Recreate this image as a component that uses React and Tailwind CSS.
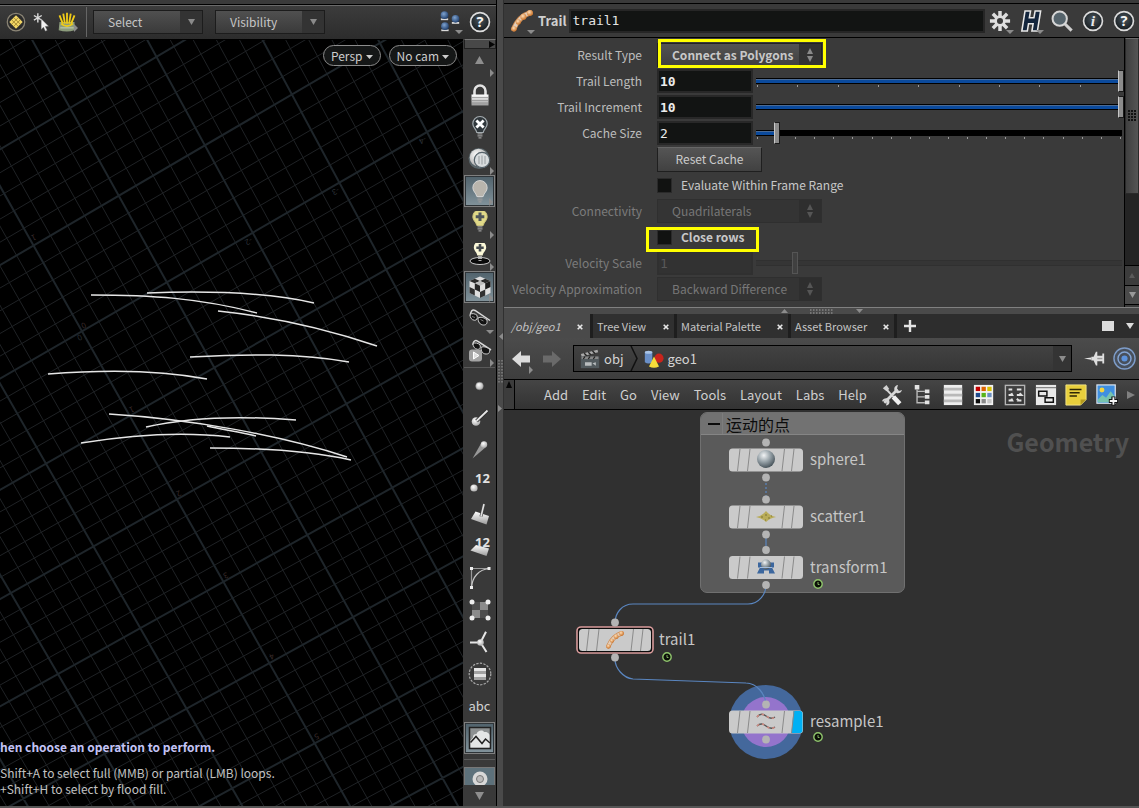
import React from "react";

const UI = "font-['Noto_Sans_CJK_SC','Noto_Sans',sans-serif]";
const MONO = "font-['DejaVu_Sans_Mono','Liberation_Mono',monospace]";

/* ---------- viewport grid ---------- */

function solve(m) {
  const n = m.length;
  for (let c = 0; c < n; c++) {
    let p = c;
    for (let r = c + 1; r < n; r++) if (Math.abs(m[r][c]) > Math.abs(m[p][c])) p = r;
    [m[c], m[p]] = [m[p], m[c]];
    for (let r = 0; r < n; r++) {
      if (r === c) continue;
      const f = m[r][c] / m[c][c];
      for (let k = c; k <= n; k++) m[r][k] -= f * m[c][k];
    }
  }
  return m.map((row, i) => row[n] / row[i]);
}

// ground plane cell -> viewport position
const anchors = [
  [-2, 1, 70, 68],
  [0, 4, 427, 92],
  [3, -2, 58, 634],
  [5, 1, 398, 658],
];
const rows = [];
anchors.forEach(([i, j, x, y]) => {
  rows.push([i, j, 1, 0, 0, 0, -x * i, -x * j, x]);
  rows.push([0, 0, 0, i, j, 1, -y * i, -y * j, y]);
});
const h = solve(rows);
const project = (i, j) => {
  const w = h[6] * i + h[7] * j + 1;
  return [(h[0] * i + h[1] * j + h[2]) / w, (h[3] * i + h[4] * j + h[5]) / w];
};
const segment = (a, b) => {
  const [x1, y1] = project(...a);
  const [x2, y2] = project(...b);
  return `M${x1.toFixed(1)} ${y1.toFixed(1)}L${x2.toFixed(1)} ${y2.toFixed(1)}`;
};
let minor = "";
let major = "";
for (let k = -40; k <= 60; k++) {
  const s = segment([k / 5, -8], [k / 5, 12]) + segment([-8, k / 5], [12, k / 5]);
  if (k % 5 === 0) major += s;
  else minor += s;
}

const axisLabels = [
  ["1", 34, 198, "#3a2c2c"],
  ["0", 84, 286, "#3a2c2c"],
  ["0", 80, 298, "#2c3238"],
  ["-2", 249, 202, "#2c3238"],
  ["-3", 336, 152, "#2c3238"],
  ["-4", 423, 101, "#2c3238"],
  ["1", 132, 370, "#3a2c2c"],
  ["2", 179, 454, "#3a2c2c"],
  ["3", 226, 536, "#3a2c2c"],
  ["4", 272, 617, "#3a2c2c"],
  ["5", 317, 697, "#3a2c2c"],
];

const trails = [
  "M91 295C150 295 200 298 257 313",
  "M147 293C200 291 262 291 314 303",
  "M218 311C275 317 330 330 377 346",
  "M190 357C245 354 300 353 349 362",
  "M48 374C110 369 160 370 207 379",
  "M109 414C190 419 280 435 347 457",
  "M146 427C190 417 245 416 296 420",
  "M207 426C225 430 240 432 256 436",
  "M81 443C130 435 180 431 230 437",
  "M210 448C260 448 310 451 351 460",
];

function Viewport() {
  return (
    <svg className="absolute inset-0 h-full w-full" aria-hidden="true">
      <path d={minor} stroke="#1f2225" strokeWidth="1" fill="none" />
      <path d={major} stroke="#1e252a" strokeWidth="2" fill="none" />
      {axisLabels.map(([t, x, y, c]) => (
        <text key={`${x}-${y}`} transform={`translate(${x} ${y}) rotate(155)`} textAnchor="middle" dominantBaseline="central" fill={c} className="text-[8px]">
          {t}
        </text>
      ))}
      <g transform="translate(0 -40)" fill="none" stroke="#e6e6e6" strokeWidth="1.500">
        {trails.map((d) => (
          <path key={d} d={d} />
        ))}
      </g>
    </svg>
  );
}

/* ---------- drawings ---------- */

const Defs = () => (
  <svg width="0" height="0" className="absolute" aria-hidden="true">
    <defs>
      <linearGradient id="metal" x1="0" y1="0" x2="0" y2="1">
        <stop offset="0" stopColor="#ffffff" />
        <stop offset="1" stopColor="#9a9a9a" />
      </linearGradient>
      <radialGradient id="ball" cx="0.38" cy="0.3" r="0.7">
        <stop offset="0" stopColor="#f2f4f5" />
        <stop offset="0.5" stopColor="#9aa5ab" />
        <stop offset="1" stopColor="#4a565d" />
      </radialGradient>
      <radialGradient id="white" cx="0.4" cy="0.35" r="0.7">
        <stop offset="0" stopColor="#ffffff" />
        <stop offset="1" stopColor="#a8a8a8" />
      </radialGradient>
      <radialGradient id="blue" cx="0.4" cy="0.35" r="0.7">
        <stop offset="0" stopColor="#7fa3cf" />
        <stop offset="1" stopColor="#1b3a68" />
      </radialGradient>
      <radialGradient id="badge" cx="0.5" cy="0.4" r="0.6">
        <stop offset="0" stopColor="#4a555c" />
        <stop offset="1" stopColor="#14191d" />
      </radialGradient>
      <radialGradient id="orange" cx="0.4" cy="0.35" r="0.7">
        <stop offset="0" stopColor="#ffdfb8" />
        <stop offset="1" stopColor="#c56a1e" />
      </radialGradient>
    </defs>
  </svg>
);

const Svg = ({ s = 24, children, className = "" }) => (
  <svg viewBox="0 0 24 24" width={s} height={s} className={`shrink-0 ${className}`} fill="none" aria-hidden="true">
    {children}
  </svg>
);

const bulbPath = "M12 1.500a7.200 7.200 0 0 0-7.200 7.200c0 3.800 3.200 5 4 8.800h6.400c.8-3.800 4-5 4-8.800A7.200 7.200 0 0 0 12 1.500z";
const BulbBase = () => <path d="M9.500 18.800h5M9.500 20.800h5M10.500 22.800h3" stroke="#9a9a9a" strokeWidth="1.200" />;

const icons = {
  lock: (
    <>
      <path d="M6.500 12V8a5.500 5.500 0 0 1 11 0v4" stroke="#e2e2e2" strokeWidth="2.600" />
      <rect x="3.500" y="11.500" width="17" height="11" fill="url(#metal)" />
      <path d="M4 14.500h16M4 17.500h16M4 20h16" stroke="#8b8b8b" strokeWidth="0.700" />
    </>
  ),
  bulbX: (
    <>
      <path d={bulbPath} fill="#30373b" stroke="#a4acb0" strokeWidth="1.200" />
      <path d="M8.400 5.400l7.200 7.200M15.600 5.400l-7.200 7.200" stroke="#fff" strokeWidth="2.800" />
      <BulbBase />
    </>
  ),
  headlight: (
    <>
      <circle cx="11" cy="11.500" r="10.500" fill="#78909a" opacity="0.500" />
      <circle cx="10.500" cy="10.500" r="8.800" fill="url(#white)" />
      <circle cx="14" cy="13" r="7.700" fill="#d8dcde" stroke="#55626a" strokeWidth="1.200" />
      <path d="M11 9v8M14 8.500v9M17 9v8" stroke="#a2a8ab" strokeWidth="1.200" />
    </>
  ),
  bulb: (
    <>
      <path d={bulbPath} fill="#b9b5ad" stroke="#dedede" strokeWidth="0.800" />
      <BulbBase />
    </>
  ),
  bulbPlus: (
    <g transform="translate(0 -3)">
      <path d={bulbPath} fill="#e0d988" stroke="#c9c07a" strokeWidth="1" />
      <path d="M12 4.500v8.600M7.700 8.800h8.600" stroke="#4f565a" strokeWidth="3" />
      <BulbBase />
    </g>
  ),
  bulbShadow: (
    <g transform="translate(0 -2.500)">
      <ellipse cx="12" cy="20.500" rx="10" ry="3.500" fill="#0a0a0a" stroke="#c8c8c8" strokeWidth="1" />
      <path d="M12 .5a6.200 6.200 0 0 0-6.200 6.200c0 3.600 3 4.800 3.500 8.300h5.400c.5-3.500 3.500-4.700 3.500-8.300A6.200 6.200 0 0 0 12 .5z" fill="#fbf8d8" />
      <path d="M12 3.500v7.400M8.300 7.200h7.400" stroke="#454b50" strokeWidth="2.600" />
      <path d="M10 16h4M10 18h4M10.500 20h3" stroke="#aaa" strokeWidth="1.200" />
    </g>
  ),
  cube: (
    <>
      <path d="M1.500 6L12 1.500 22.500 6v12L12 23 1.500 18z" fill="#dedede" />
      <path d="M1.500 6l5.300-2.300L12 6 6.800 8.300zM12 6l5.200-2.300L22.500 6l-5.300 2.300z" fill="#2a2a2a" />
      <path d="M6.800 8.300L12 6l5.200 2.300L12 10.700z" fill="#bdbdbd" />
      <path d="M6.800 8.300l5.200 2.400v6.200l-5.200-2.400z" fill="#262626" />
      <path d="M1.500 12l5.300 2.500v6L1.500 18zM12 16.900l5.200-2.400v6L12 23z" fill="#303030" />
      <path d="M17.200 8.300L22.500 6v6l-5.300 2.500z" fill="#1c1c1c" />
    </>
  ),
  glasses: (
    <>
      <path d="M2.500 9c0-5 2-7 4.500-5.500L22 13.500" stroke="#d8d8d8" strokeWidth="1.500" />
      <path d="M2 7.500c2-1.500 5-1 7 .8 1 3.500-.5 5-2.500 5C3.500 13 2 10.500 2 7.500zM10 11c2.500-1.500 6-.5 9 2 .5 4-1 5-3.500 5-3.500 0-5.500-3-5.500-7z" fill="#131313" stroke="#cfcfcf" strokeWidth="1" />
      <path d="M4 9.500l3 1M12.500 12.500l3 1.500" stroke="#777" strokeWidth="1" />
    </>
  ),
  glassesPlay: (
    <>
      <path d="M5 6c0-5 3-5 5-3.500L23 11" stroke="#d8d8d8" strokeWidth="1.500" />
      <path d="M5 4.500c2-1 5-.5 7 1.300 1 3.500-.5 4.500-2.500 4.500C6.500 10 5 7.500 5 4.500zM13 8.500c2.500-1.500 5.500-.5 8.500 1.800.5 4-1 4.700-3.500 4.700-3.500 0-5-3-5-6.500z" fill="#131313" stroke="#cfcfcf" strokeWidth="1" />
      <rect x="1" y="10.500" width="13" height="12" rx="3" fill="#a4a4a4" />
      <path d="M5.500 13l5.500 3.500-5.500 3.500z" fill="#ddd" stroke="#fff" strokeWidth="1" />
    </>
  ),
  point: <circle cx="11.500" cy="12" r="3.800" fill="url(#white)" stroke="#888" strokeWidth="0.500" />,
  normal: (
    <>
      <circle cx="8" cy="15.500" r="4.300" fill="url(#white)" />
      <path d="M8.500 15L19.500 4.500" stroke="#2c2c2c" strokeWidth="3.600" />
      <path d="M8.500 15L19.500 4.500" stroke="#e5e5e5" strokeWidth="1.800" />
    </>
  ),
  trailPt: (
    <>
      <path d="M4.500 20.500L13 5.500l5 3.500z" fill="#999" />
      <circle cx="16" cy="6.500" r="3.200" fill="url(#white)" />
    </>
  ),
  prim: (
    <>
      <path d="M7.500 9.500L21 14l-2.500 8.500L3 17z" fill="url(#metal)" />
      <path d="M13 14.500L16 2" stroke="#444" strokeWidth="3" />
      <path d="M13 14.500L16 2" stroke="#e2e2e2" strokeWidth="1.600" />
    </>
  ),
  hull: (
    <>
      <path d="M3.500 22V2.500H21" stroke="#999" strokeWidth="1.200" />
      <path d="M3.500 22C4 11 11 3.500 21 2.500" stroke="#c8c8c8" strokeWidth="1.200" />
      <path d="M2 1h3v3H2zM19.500 1h3v3h-3zM2 20h3v3H2z" fill="#eee" />
    </>
  ),
  uv: (
    <>
      <rect x="4" y="4" width="16" height="16" fill="#4d4d4d" />
      <path d="M4 12h8v8H4zM12 4h8v8h-8z" fill="#8b8b8b" />
      <circle cx="4" cy="4" r="2.500" fill="#eee" />
      <circle cx="20" cy="4" r="2.500" fill="#eee" />
      <circle cx="4" cy="20" r="2.500" fill="#eee" />
      <circle cx="20" cy="20" r="2.500" fill="#eee" />
    </>
  ),
  axis: (
    <>
      <path d="M12.500 12.500L18 1.800M12.500 12.500L18.500 22M12.500 12.500H2" stroke="#e6e6e6" strokeWidth="2" />
      <circle cx="12.500" cy="12.500" r="3.300" fill="url(#white)" />
    </>
  ),
  group: (
    <>
      <circle cx="12" cy="12" r="10.800" stroke="#a8a8a8" strokeWidth="1.200" strokeDasharray="2.300 1.300" />
      <rect x="6" y="6" width="12" height="12" fill="#e4e4e4" />
      <path d="M6 10.500h12M6 16.500h12" stroke="#a2a2a2" strokeWidth="3" />
    </>
  ),
  image: (
    <>
      <rect x="1.500" y="1.500" width="21" height="21" fill="#8d9192" stroke="#222" strokeWidth="1.500" />
      <path d="M5 11.500c0-3 2-3.500 3.500-3.500 1-3.500 6-4.500 7.500-2 3-.5 6 1 5.500 4.500v11h-19v-7z" fill="#e4e6e6" />
      <path d="M2.500 16.500L8 10.500l6 7 3.500-4.500 4.500 4" stroke="#222" strokeWidth="1.500" />
    </>
  ),
};

const Num12 = ({ children }) => (
  <svg viewBox="0 0 24 24" width="24" height="24" className="overflow-visible" aria-hidden="true">
    {children}
    <text x="7" y="13" fill="#e2e2e2" className="font-['Open_Sans',sans-serif] text-[13px] font-bold">12</text>
  </svg>
);

const Corner = ({ down, className = "" }) => (
  <svg width="8" height="8" viewBox="0 0 8 8" className={`absolute ${className}`} aria-hidden="true">
    <path d={down ? "M0 2h8L4 6z" : "M2 0v8l4-4z"} fill="#8c8c8c" />
  </svg>
);

const Tri = ({ up, className = "" }) => (
  <svg width="9" height="8" viewBox="0 0 9 8" preserveAspectRatio="none" className={className} aria-hidden="true">
    <path d={up ? "M0 8L4.500 0 9 8z" : "M0 0h9L4.500 8z"} fill="currentColor" />
  </svg>
);

function Round({ italic, s = 22 }) {
  return (
    <svg viewBox="0 0 24 24" width={s} height={s} className="shrink-0" aria-hidden="true">
      <circle cx="12" cy="12" r="10.300" fill="url(#badge)" stroke="#dcdcdc" strokeWidth="1.800" />
      {italic ? (
        <text x="12" y="17.500" textAnchor="middle" fill="#e8e8e8" className="font-['Liberation_Serif',serif] text-[17px] font-bold italic">i</text>
      ) : (
        <text x="12" y="17.500" textAnchor="middle" fill="#f4f4f4" className="font-['Open_Sans',sans-serif] text-[16px] font-bold">?</text>
      )}
    </svg>
  );
}

const TrailBeads = () => (
  <>
    <path d="M3 20.500C7 11 13 5.500 21 3" stroke="#cf8a50" strokeWidth="6" strokeLinecap="round" />
    <path d="M3 20.500C7 11 13 5.500 21 3" stroke="#e2cdb8" strokeWidth="4" strokeLinecap="round" />
    <circle cx="3.500" cy="20.500" r="2.800" fill="url(#orange)" />
    <circle cx="8" cy="13" r="2.800" fill="url(#orange)" />
    <circle cx="13.500" cy="7.500" r="3.300" fill="url(#orange)" />
    <circle cx="20.500" cy="3.300" r="3.200" fill="url(#orange)" />
  </>
);

/* ---------- left pane ---------- */

function ToolDrop({ label }) {
  return (
    <button className="flex h-[24px] w-[110px] items-center border border-[#1c1c1c] bg-linear-to-b from-[#505050] to-[#3a3a3a] text-[12px] text-[#c6c6c6]">
      <span className="flex-1 pl-[14px] text-left leading-[22px]">{label}</span>
      <span className="flex h-full w-[22px] items-center justify-center bg-[#333333] text-[#8a8a8a]">
        <Tri className="h-[6px] w-[7px]" />
      </span>
    </button>
  );
}

const toolsA = [
  ["Lock camera", icons.lock, "", ""],
  ["No lighting", icons.bulbX, "", ""],
  ["Headlight", icons.headlight, "", "r"],
  ["Normal lighting", icons.bulb, "on", "r"],
  ["High quality lighting", icons.bulbPlus, "", "r"],
  ["Shadows", icons.bulbShadow, "", "r"],
  ["Materials", icons.cube, "on", "r"],
  ["Hide objects", icons.glasses, "", "d"],
  ["Ghost objects", icons.glassesPlay, "", "r"],
];
const dot12 = (
  <Num12>
    <circle cx="6" cy="18" r="3.600" fill="url(#white)" />
  </Num12>
);
const prim12 = (
  <Num12>
    <path d="M8 11l13 3.500-2.500 7.500L2.500 16.500z" fill="url(#metal)" />
  </Num12>
);
const toolsB = [
  ["Points", icons.point],
  ["Point normals", icons.normal],
  ["Point trails", icons.trailPt],
  ["Point numbers", null, dot12],
  ["Primitive normals", icons.prim],
  ["Primitive numbers", null, prim12],
  ["Hulls", icons.hull],
  ["UV", icons.uv],
  ["Axes", icons.axis],
  ["Groups", icons.group],
  ["Labels", null, <span key="abc" className="text-[13px] text-[#d2d2d2]">abc</span>],
  ["Background image", icons.image, null, true],
];

function ToolButton({ label, icon, node, on, arrow }) {
  return (
    <button
      aria-label={label}
      className={`relative flex h-[32px] w-[31px] shrink-0 items-center justify-center ${
        on ? "border border-[#7f7f7f] bg-linear-to-b from-[#50626c] to-[#82939b] ring-1 ring-inset ring-[#2e3438]" : ""
      }`}
    >
      {icon ? <Svg s={24}>{icon}</Svg> : node}
      {arrow === "r" && <Corner className="-right-[1px] bottom-0" />}
      {arrow === "d" && <Corner down className="right-[1px] -bottom-[1px]" />}
    </button>
  );
}

function LeftPane() {
  return (
    <section className="flex min-w-0 flex-col border-r border-black bg-[#3a3a3a]">
      <div className="h-[5px] border-b border-black" />
      <div className="flex h-[34px] items-center overflow-hidden border-t border-[#6a6a6a] bg-linear-to-b from-[#3c3c3c] to-[#2c2c2c] pb-[2px]">
        <button aria-label="Snap to grid" className="ml-[6px]">
          <Svg s={20}>
            <circle cx="12" cy="12" r="10.500" fill="#2c2c2c" stroke="#8a8475" strokeWidth="1.500" />
            <path d="M12 4l8 8-8 8-8-8z" fill="#f3d765" />
            <path d="M9.300 6.700l8 8M6.700 9.300l8 8M14.700 6.700l-8 8M17.300 9.300l-8 8" stroke="#9a7f2c" strokeWidth="1" />
          </Svg>
        </button>
        <button aria-label="Select tool" className="ml-[6px]">
          <Svg s={20}>
            <path d="M7 1.500v11M2.300 4.200l9.400 5.600M11.700 4.200L2.300 9.800" stroke="#dadada" strokeWidth="1.700" />
            <path d="M11 8l9 9-4 .3 2.300 4.700-2.300 1-2.200-4.800L11 21z" fill="#f2f2f2" stroke="#555" strokeWidth="0.500" />
          </Svg>
        </button>
        <button aria-label="Grass brush" className="relative ml-[5px]">
          <Svg s={20}>
            <path d="M3 12h18v10q-9 3-19 0z" fill="#8c9c7c" />
            <path d="M3 4l4 10M7.500 2l2 12M12 1v13M16.500 2l-2 12M21 4l-4 10M5 14q7 6 14 0" stroke="#f0cb18" strokeWidth="2.200" />
            <path d="M4 19h16" stroke="#bac5a8" strokeWidth="1.500" />
          </Svg>
          <Corner className="-right-[3px] bottom-0" />
        </button>
        <div className="ml-[9px] h-[30px] w-px bg-[#666666]" />
        <div className="ml-[6px] flex gap-[12px]">
          <ToolDrop label="Select" />
          <ToolDrop label="Visibility" />
        </div>
        <div className="flex-1" />
        <button aria-label="Display users" className="relative">
          <Svg s={22}>
            {[[6, 4.500], [18, 8.500], [6.500, 16.500]].map(([x, y]) => (
              <g key={x}>
                <path d={`M${x - 4} ${y + 3.500}h8v2h-8z`} fill="#d8d8d8" />
                <circle cx={x} cy={y} r="4.200" fill="url(#blue)" />
              </g>
            ))}
          </Svg>
          <Corner down className="-right-[2px] -bottom-[3px]" />
        </button>
        <button aria-label="Help" className="ml-[8px] mr-[5px]">
          <Round s={22} />
        </button>
      </div>
      <div className="flex flex-1">
        <div className="relative min-w-0 flex-1 overflow-hidden border-t border-black bg-black">
          <Viewport />
          <div className="relative flex h-full flex-col justify-between">
            <div className="flex justify-end gap-[8px] pr-[6px] pt-[5px]">
              {["Persp", "No cam"].map((t) => (
                <button key={t} className="flex h-[21px] items-center gap-[3px] rounded-full border border-[#8c8c8c] bg-[#151717] px-[7px] text-[12px] leading-none text-[#cdcdcd]">
                  {t}
                  <Tri className="mt-[2px] h-[4px] w-[7px]" />
                </button>
              ))}
            </div>
            <div className="whitespace-nowrap pb-[9px] text-[12px] leading-[16px] text-[#c2c2c2]">
              <p className="mb-[10px] font-bold text-[#c4c4f6]">hen choose an operation to perform.</p>
              <p>Shift+A to select full (MMB) or partial (LMB) loops.</p>
              <p>+Shift+H to select by flood fill.</p>
            </div>
          </div>
        </div>
        <div className="flex w-[33px] flex-col items-start bg-[#393939] pl-[1px]">
          <button aria-label="Collapse toolbar" className="flex h-[10px] w-full items-center justify-end border border-[#202020] border-t-[#777777] bg-[#484848]">
            <svg width="6" height="7" viewBox="0 0 6 7"><path d="M0 0v7l6-3.500z" fill="#050505" /></svg>
          </button>
          <div className="relative flex h-[30px] w-[31px] justify-center pt-[7px] text-[#8e8e8e]">
            <Tri up />
            <Corner className="-right-[1px] bottom-[2px]" />
          </div>
          {toolsA.map(([l, ic, on, ar]) => (
            <ToolButton key={l} label={l} icon={ic} on={on === "on"} arrow={ar} />
          ))}
          <div className="h-[3px] w-[31px] border-t border-[#5a5a5a]" />
          {toolsB.map(([l, ic, node, on]) => (
            <ToolButton key={l} label={l} icon={ic} node={node} on={on} />
          ))}
          <div className="h-[6px] w-[31px] border-b border-[#5a5a5a]" />
          <div className="mt-[7px] h-[18px] w-[31px] overflow-hidden border border-b-0 border-[#777777] bg-[#5d717b]">
            <svg width="29" height="24" viewBox="0 0 29 24" aria-hidden="true">
              <circle cx="15" cy="11" r="7.500" fill="#d8d8d8" />
              <circle cx="15" cy="11" r="3.500" fill="#bbb" stroke="#777" />
            </svg>
          </div>
          <div className="flex h-[21px] w-[31px] items-center justify-center text-[#8e8e8e]">
            <Tri />
          </div>
        </div>
      </div>
    </section>
  );
}

/* ---------- parameters ---------- */

function Row({ label, dim, id, children }) {
  return (
    <div className="grid h-[26px] grid-cols-[138px_minmax(0,1fr)] items-center gap-[15px]">
      <label htmlFor={id} className={`whitespace-nowrap text-right ${dim ? "text-[#7c7c7c]" : "text-[#bdbdbd]"}`}>
        {label}
      </label>
      <div className="flex min-w-0 items-center">{children}</div>
    </div>
  );
}

function Menu({ id, value, dim, bold }) {
  return (
    <span className="relative block h-[24px] w-[165px]">
      <select
        id={id}
        disabled={dim}
        className={`h-full w-full appearance-none border pl-[14px] pr-[24px] leading-[22px] opacity-100 outline-none ${
          dim ? "border-[#2f2f2f] bg-[#343434] text-[#777777]" : "border-[#222222] bg-linear-to-b from-[#535353] to-[#404040] text-[#c8c8c8]"
        } ${bold ? "font-bold" : ""}`}
      >
        <option>{value}</option>
      </select>
      <span className={`pointer-events-none absolute inset-y-[1px] right-[1px] flex w-[22px] flex-col items-center justify-center gap-[2px] ${dim ? "bg-[#2e2e2e] text-[#555555]" : "bg-[#333333] text-[#8a8a8a]"}`}>
        <Tri up className="h-[6px] w-[6px]" />
        <Tri className="h-[6px] w-[6px]" />
      </span>
    </span>
  );
}

function Field({ id, value, bold, dim }) {
  return (
    <input
      id={id}
      defaultValue={value}
      disabled={dim}
      className={`h-[24px] w-[96px] shrink-0 border-2 px-[1px] text-[13px] outline-none ${MONO} ${
        dim ? "border-[#303030] bg-[#323232] text-[#585858]" : "border-[#282828] bg-[#121413] text-[#ececec]"
      } ${bold ? "font-bold" : ""}`}
    />
  );
}

function Slider({ label, pct, ticks = 0, dim }) {
  return (
    <div className="relative ml-[3px] mr-[2px] flex h-[24px] min-w-0 flex-1 items-center">
      <div className={`absolute inset-x-0 top-[9px] h-[6px] border-y ${dim ? "border-[#303030] bg-[#353535]" : "border-black bg-black"}`}>
        {!dim && <div className="h-full border-t border-[#4a6a94] bg-[#0b4a9c]" style={{ width: `${pct}%` }} />}
      </div>
      {ticks > 0 && (
        <div className="absolute inset-x-[1px] top-[16px] flex justify-between">
          {Array.from({ length: ticks }, (_, i) => (
            <span key={i} className="h-[2px] w-px bg-[#9a9a9a]" />
          ))}
        </div>
      )}
      <input
        type="range"
        aria-label={label}
        min="0"
        max="100"
        defaultValue={pct}
        disabled={dim}
        className={`relative h-[22px] w-[calc(100%+2px)] shrink-0 appearance-none bg-transparent [&::-webkit-slider-thumb]:h-[22px] [&::-webkit-slider-thumb]:w-[6px] [&::-webkit-slider-thumb]:appearance-none [&::-webkit-slider-thumb]:border ${
          dim
            ? "[&::-webkit-slider-thumb]:border-[#555555] [&::-webkit-slider-thumb]:bg-[#404040]"
            : "[&::-webkit-slider-thumb]:border-[#1a1a1a] [&::-webkit-slider-thumb]:border-l-[#c8c8c8] [&::-webkit-slider-thumb]:bg-[#8c8c8c]"
        }`}
      />
    </div>
  );
}

function Check({ label, bold }) {
  return (
    <label className={`flex items-center gap-[9px] whitespace-nowrap text-[#c8c8c8] ${bold ? "font-bold" : ""}`}>
      <input type="checkbox" className="h-[15px] w-[15px] appearance-none border border-[#2a2a2a] bg-[#111211]" />
      {label}
    </label>
  );
}

function Params() {
  return (
    <div className="flex border-t border-black">
      <div className="relative min-w-0 flex-1 pb-[5px] pt-[4px] text-[12px]">
        <Row label="Result Type" id="rt">
          <span className="relative">
            <Menu id="rt" value="Connect as Polygons" bold />
            <span className="pointer-events-none absolute left-[1px] -right-[4px] -top-[4px] h-[29px] border-3 border-[#ffff00]" />
          </span>
        </Row>
        <Row label="Trail Length" id="tl">
          <Field id="tl" value="10" bold />
          <Slider label="Trail Length" pct={100} ticks={10} />
        </Row>
        <Row label="Trail Increment" id="ti">
          <Field id="ti" value="10" bold />
          <Slider label="Trail Increment" pct={100} />
        </Row>
        <Row label="Cache Size" id="cs">
          <Field id="cs" value="2" />
          <Slider label="Cache Size" pct={5} ticks={20} />
        </Row>
        <Row>
          <button className="h-[25px] w-[105px] border border-[#1f1f1f] border-t-[#666666] bg-linear-to-b from-[#555555] to-[#414141] text-[#cccccc]">Reset Cache</button>
        </Row>
        <Row>
          <Check label="Evaluate Within Frame Range" />
        </Row>
        <Row label="Connectivity" id="cn" dim>
          <Menu id="cn" value="Quadrilaterals" dim />
        </Row>
        <Row>
          <span className="relative">
            <Check label="Close rows" bold />
            <span className="pointer-events-none absolute -left-[11px] -right-[14px] -top-[1px] h-[25px] border-3 border-[#ffff00]" />
          </span>
        </Row>
        <Row label="Velocity Scale" id="vs" dim>
          <Field id="vs" value="1" dim />
          <Slider label="Velocity Scale" pct={10} dim />
        </Row>
        <Row label="Velocity Approximation" id="va" dim>
          <Menu id="va" value="Backward Difference" dim />
        </Row>
      </div>
      <div className="flex w-[15px] flex-col border-l border-black bg-[#242424]">
        <div className="relative h-[156px] border border-[#2a2a2a] border-t-[#6c6c6c] bg-linear-to-r from-[#404040] to-[#555555]">
          <div className="absolute inset-x-[2px] top-[71px] grid grid-cols-3 gap-[1px]">
            {Array.from({ length: 12 }, (_, i) => (
              <span key={i} className="h-[2px] bg-[#111111]" />
            ))}
          </div>
        </div>
        <div className="flex-1" />
        <button aria-label="Scroll up" className="flex h-[21px] items-center justify-center border-y border-black bg-[#3c3c3c] text-[#5a5a5a]">
          <Tri up className="h-[5px] w-[6px]" />
        </button>
        <button aria-label="Scroll down" className="flex h-[19px] items-center justify-center border-b border-black bg-[#4a4a4a] text-[#999999]">
          <Tri className="h-[6px] w-[7px]" />
        </button>
        <div className="h-[2px] bg-[#3a3a3a]" />
      </div>
    </div>
  );
}

function ParamHeader() {
  return (
    <div className="flex h-[33px] items-center pl-[5px] pr-[4px]">
      <button aria-label="Operator menu" className="relative ml-[2px]">
        <Svg s={22} className="overflow-visible"><TrailBeads /></Svg>
        <Corner down className="-bottom-[4px] -right-[2px]" />
      </button>
      <label htmlFor="opname" className="ml-[5px] text-[13px] font-bold text-[#cfcfcf]">Trail</label>
      <input id="opname" defaultValue="trail1" className={`ml-[3px] h-[24px] min-w-0 flex-1 border-2 border-[#262626] bg-[#121413] px-[1px] text-[13px] text-[#e4e4e4] outline-none ${MONO}`} />
      <div className="ml-[4px] flex items-center gap-[9px]">
        <button aria-label="Settings" className="relative">
          <Svg s={22}>
            <path d="M12 1v22M1 12h22M4.200 4.200l15.600 15.600M19.800 4.200L4.200 19.800" stroke="#dedede" strokeWidth="3.800" />
            <circle cx="12" cy="12" r="6.300" fill="#dedede" />
            <circle cx="12" cy="12" r="3.300" fill="#3a3a3a" />
          </Svg>
          <Corner down className="-bottom-[4px] -right-[3px]" />
        </button>
        <button aria-label="Houdini menu" className="relative">
          <Svg s={22}>
            <path d="M5.500 1h6l-1.300 7.500h5L16.500 1h6L19 23h-6l1.300-8h-5L8 23H2z" fill="#12243c" stroke="#e8e8e8" strokeWidth="1.700" />
          </Svg>
          <Corner down className="-bottom-[4px] -right-[2px]" />
        </button>
        <button aria-label="Search">
          <Svg s={22}>
            <path d="M15 15l7.500 7.500" stroke="#d0d0d0" strokeWidth="3.400" />
            <circle cx="9.500" cy="9.500" r="7.800" fill="#56646c" stroke="#d6d6d6" strokeWidth="2.200" />
          </Svg>
        </button>
        <button aria-label="Info"><Round italic s={22} /></button>
        <button aria-label="Help"><Round s={22} /></button>
      </div>
    </div>
  );
}

/* ---------- network pane ---------- */

const Close = () => (
  <svg width="6" height="6" viewBox="0 0 6 6" className="mt-[2px] shrink-0" aria-hidden="true">
    <path d="M.7.7l4.600 4.600M5.300.7L.7 5.300" stroke="#e8e8e8" strokeWidth="1.600" />
  </svg>
);

function Tabs() {
  const tabs = [
    ["Tree View", "w-[87px]"],
    ["Material Palette", "w-[114px]"],
    ["Asset Browser", "w-[106px]"],
  ];
  return (
    <div className="flex h-[24px] bg-[#2d2d2d] text-[11px] text-[#c4c4c4]">
      <button className="flex w-[86px] items-center justify-between bg-[#4a4a4a] pl-[7px] pr-[7px] italic">
        /obj/geo1 <Close />
      </button>
      {tabs.map(([t, w]) => (
        <button key={t} className={`flex items-center justify-between whitespace-nowrap border-r-[3px] border-[#1e1e1e] bg-[#303030] pl-[4px] pr-[5px] ${t === "Tree View" ? "border-l-[3px]" : ""} ${w}`}>
          {t} <Close />
        </button>
      ))}
      <button aria-label="New tab" className="ml-[7px] flex items-center">
        <svg width="12" height="12" viewBox="0 0 12 12"><path d="M6 0v12M0 6h12" stroke="#e4e4e4" strokeWidth="2.400" /></svg>
      </button>
      <div className="flex-1" />
      <button aria-label="Maximize" className="flex items-center"><span className="h-[10px] w-[12px] bg-[#dcdcdc]" /></button>
      <button aria-label="Pane menu" className="ml-[12px] mr-[5px] flex items-center text-[#dcdcdc]"><Tri className="h-[6px] w-[8px]" /></button>
    </div>
  );
}

const Arrow = ({ fill, flip }) => (
  <svg width="20" height="18" viewBox="0 0 20 18" aria-hidden="true">
    <path d={flip ? "M19 9L10 1v4.500H1v7h9V17z" : "M1 9l9-8v4.500h9v7h-9V17z"} fill={fill} />
  </svg>
);

function PathBar() {
  return (
    <div className="flex h-[41px] items-center bg-linear-to-b from-[#4b4b4b] to-[#3e3e3e] pl-[7px]">
      <button aria-label="Back" className="relative">
        <Arrow fill="#dcdcdc" />
        <Corner className="-bottom-[6px] -right-[4px]" />
      </button>
      <button aria-label="Forward" className="ml-[11px]"><Arrow flip fill="#6a6a6a" /></button>
      <div className="ml-[11px] flex h-[27px] min-w-0 flex-1 items-center border border-black bg-linear-to-b from-[#424242] to-[#363636] text-[13px] text-[#d4d4d4]">
        <button className="ml-[6px] flex items-center gap-[4px]">
          <Svg s={20}>
            <rect x="1" y="9" width="22" height="14" fill="#525a5e" />
            <path d="M1 6l20-5 .8 3L2 9z" fill="#aaa" />
            <path d="M2 9h20v3H2z" fill="#888" />
            <path d="M5 5l3 3M10 4l3 3M15 2.500l3 3M6 9l-2 3M12 9l-2 3M18 9l-2 3" stroke="#222" strokeWidth="1.600" />
            <path d="M6 16h8v4H6zM15 17l4-1v4z" fill="#b9bdbf" />
          </Svg>
          obj
        </button>
        <svg width="8" height="25" viewBox="0 0 8 25" className="ml-[6px]" aria-hidden="true"><path d="M1 0l6 12.500L1 25" fill="none" stroke="#111" strokeWidth="1.500" /></svg>
        <button className="ml-[6px] flex items-center gap-[4px]">
          <Svg s={20}>
            <path d="M1 4q4.500-3 9 0v12q-4.500 3-9 0z" fill="#6a90c8" />
            <ellipse cx="5.500" cy="4" rx="4.500" ry="1.800" fill="#a8c3e6" />
            <circle cx="18" cy="11" r="5.500" fill="#c9241c" />
            <path d="M12 9l6 12q-6 3-12 0z" fill="#f6dc3a" />
          </Svg>
          geo1
        </button>
        <div className="flex-1" />
        <button aria-label="Path history" className="flex h-full w-[18px] items-center justify-center bg-[#343434] text-[#8c8c8c]"><Tri className="h-[6px] w-[7px]" /></button>
      </div>
      <button aria-label="Pin" className="ml-[12px]">
        <Svg s={22}>
          <path d="M0 11.500l8-1.200v2.400z" fill="#e8e8e8" />
          <path d="M8 9.500h2.500L13 4h1.500v4.500H20V6h2v11h-2v-2.500h-5.500V19H13l-2.500-5.500H8z" fill="#dedede" />
          <path d="M14.500 11.500H20" stroke="#9a9a9a" strokeWidth="1.500" />
        </Svg>
      </button>
      <button aria-label="Link" className="ml-[7px] mr-[3px]">
        <Svg s={23}>
          <circle cx="12" cy="12" r="11" stroke="#7d9cc8" strokeWidth="1.500" fill="#48505c" />
          <circle cx="12" cy="12" r="6.800" stroke="#84a5d4" strokeWidth="1.500" />
          <circle cx="12" cy="12" r="3.200" fill="#5d93dd" />
        </Svg>
      </button>
    </div>
  );
}

const swatches = ["#c40000", "#dc6400", "#d8c000", "#1f4a8c", "#58b418", "#6b8fc0", "#0c0c0c", "#8a8a8a", "#c8c8c8"];

const menuIcons = [
  ["Tools", (
    <>
      <path d="M3.500 20.500L18 6" stroke="#d6d6d6" strokeWidth="3" />
      <path d="M18.500 1c-4 .5-5 4.500-3 7.500s6.500 1.500 7.500-2l-3.500 1-2-2.500zM5.500 23.500c4-.5 4.500-4 3-6.500S2 15.500 1 19l3.500-1 1.500 2.500z" fill="#d6d6d6" />
      <path d="M2 4.500L6 1l3 4.500-3 2.500z" fill="#d0d0d0" />
      <path d="M6 6l8 8.500" stroke="#d6d6d6" strokeWidth="2" />
      <path d="M13.500 14l7 7.500" stroke="#f0f0f0" strokeWidth="5" />
    </>
  )],
  ["Tree", (
    <>
      <path d="M3 1h5v5H3zM14 6h5v4h-5zM14 12h5v4h-5zM14 18h5v4h-5z" fill="#e4e4e4" />
      <path d="M5.500 6v14.500H14M5.500 8H14M5.500 14H14" stroke="#bbb" strokeWidth="1.500" />
    </>
  )],
  ["List", (
    <>
      <rect x="2" y="1" width="20" height="22" fill="#eeeeee" />
      <path d="M2 5.500h20M2 12h20M2 18.500h20" stroke="#b9b9b9" strokeWidth="3" />
    </>
  )],
  ["Palette", (
    <>
      <rect x="1" y="1" width="21" height="22" fill="#f2f2f2" />
      {swatches.map((c, i) => (
        <rect key={c} x={3 + (i % 3) * 6.300} y={3 + Math.floor(i / 3) * 6.700} width="4.700" height="4.700" fill={c} />
      ))}
    </>
  )],
  ["Shapes", (
    <>
      <rect x="1.500" y="1.500" width="21" height="21" stroke="#b5b5b5" strokeWidth="1.500" />
      <path d="M5 6h4M14 6h5M5 12h4l-1-2M14 12h5l-2-2M5 18h4l-1-2M14 18h5M14 16l2 2" stroke="#e2e2e2" strokeWidth="2.200" />
    </>
  )],
  ["Boxes", (
    <>
      <rect x="1" y="1" width="22" height="22" fill="#e9e9e9" />
      <path d="M1 4h22" stroke="#777" strokeWidth="1.200" />
      <path d="M4 8h9v5H4zM11 15h9v5h-9z" stroke="#111" strokeWidth="1.600" />
    </>
  )],
  ["Sticky note", (
    <>
      <path d="M1 1h22v16l-6 6H1z" fill="#e8cf3c" stroke="#f4e68a" strokeWidth="1" />
      <path d="M17 23v-6h6z" fill="#b4991e" />
      <path d="M5 6h13M5 9.500h11M5 13h8" stroke="#2c2706" strokeWidth="1.700" />
    </>
  )],
  ["Add image", (
    <>
      <rect x="1" y="1" width="20" height="20" fill="#3f8fe0" stroke="#dfe6ee" strokeWidth="1.300" />
      <circle cx="6.500" cy="6.500" r="2.700" fill="#f3d640" />
      <path d="M2 17l5-5 4 3 5-7 4 5v7H2z" fill="#77c4ae" />
      <path d="M19 13.500v10M14 18.500h10" stroke="#111" strokeWidth="4.500" />
      <path d="M19 14.500v8M15 18.500h8" stroke="#f4f4f4" strokeWidth="2" />
    </>
  )],
];

function MenuBar() {
  return (
    <div className="flex h-[31px] items-center border-y border-black bg-linear-to-b from-[#454545] to-[#333333]">
      <div className="flex h-full w-[11px] justify-center border-r border-black bg-[#3c3c3c] pt-[1px]">
        <svg width="6" height="7" viewBox="0 0 6 7" aria-hidden="true"><path d="M0 7l3-7 3 7z" fill="#050505" /></svg>
      </div>
      <nav className="ml-[29px] flex gap-[14px] whitespace-nowrap text-[13px] text-[#cfcfcf]">
        {["Add", "Edit", "Go", "View", "Tools", "Layout", "Labs", "Help"].map((t) => (
          <button key={t}>{t}</button>
        ))}
      </nav>
      <div className="ml-[14px] flex flex-1 items-center justify-between pr-[4px]">
        {menuIcons.map(([l, d]) => (
          <button key={l} aria-label={l}><Svg s={22}>{d}</Svg></button>
        ))}
        <svg width="8" height="8" viewBox="0 0 8 8" aria-hidden="true"><path d="M0 0v8l8-4z" fill="#808080" /></svg>
      </div>
    </div>
  );
}

function NodeBody({ x, y, selected, flag, children }) {
  return (
    <g transform={`translate(${x} ${y})`}>
      {selected && <rect x="-38" y="-13" width="76" height="26" rx="4" fill="#0c0c0c" stroke="#d99c9c" strokeWidth="1.600" />}
      <rect x={selected ? -36 : -37} y={selected ? -11 : -11.500} width={selected ? 72 : 74} height={selected ? 22 : 23} rx="3.500" fill="#cacaca" />
      {flag && <path d="M27.500-11H34q2.500 0 2.500 3V8q0 3-2.500 3H25.500z" fill="#00b0f4" />}
      <path d="M-26-11l-2.500 22M-16-11l-2.500 22M18.500-11L16 11M28-11L25.500 11" stroke="#8a8a8a" strokeWidth="1" fill="none" />
      {children}
      <circle cx="0" cy="-17.500" r="3.900" fill="#b4b4b4" />
      <circle cx="0" cy="17.500" r="3.900" fill="#b4b4b4" />
    </g>
  );
}

const Clock = ({ x, y }) => (
  <g transform={`translate(${x} ${y})`}>
    <circle r="4.200" fill="#0c0f08" stroke="#8fc46c" strokeWidth="1.400" />
    <path d="M0-2V.5h1.500" stroke="#8fc46c" strokeWidth="0.900" fill="none" />
  </g>
);

function Network() {
  return (
    <div className="relative flex-1 overflow-hidden bg-[#303030]">
      <div className="absolute left-[196px] top-[2px] h-[181px] w-[205px] overflow-hidden rounded-[7px] border border-[#707070] bg-[#5a5a5a]">
        <div className="flex h-[22px] items-center border-b border-[#858585] bg-[#727272] text-[16px] text-[#0c0c0c]">
          <button aria-label="Collapse box" className="flex h-full w-[22px] items-center justify-end border-r border-[#7d7d7d] pr-[2px]"><span className="h-[2px] w-[12px] bg-[#0c0c0c]" /></button>
          <span className="pl-[3px] leading-[20px]">运动的点</span>
        </div>
      </div>
      <svg className="absolute inset-0 h-full w-full" aria-hidden="true">
        <circle cx="262" cy="312" r="37" fill="#44689c" />
        <circle cx="262" cy="312" r="25" fill="#9474cc" />
        <g fill="none" stroke="#5a86c0" strokeWidth="1.200">
          <path d="M262 69v20" strokeDasharray="2 2" />
          <path d="M262 126v14" />
          <path d="M262 175c0 9-7 19-18 19H129c-11 0-18 9-18 19" />
          <path d="M111 249c0 9 8 19 18 20l113 4c11 0 19 11 20 21" />
        </g>
        <NodeBody x={262} y={50}>
          <circle r="9" cy="-1" fill="url(#ball)" />
        </NodeBody>
        <NodeBody x={262} y={107}>
          <path d="M-10 0q6-1 10-6 4 5 10 6-6 1-10 5-4-4-10-5z" fill="#b9ac58" />
          <path d="M-5 0h2M0-3v2M2 1h2M-1 3h1M5-1h1" stroke="#7d7434" strokeWidth="1" />
        </NodeBody>
        <NodeBody x={262} y={157.5}>
          <path d="M-8-5h5v3h6v-3h5v5h-2l3 6H3V3h-5v3h-7l3-6h-2z" fill="#3c679e" />
          <circle cy="-3" r="5" fill="url(#ball)" />
          <path d="M-6 0h12" stroke="#a4bddc" strokeWidth="1" />
        </NodeBody>
        <Clock x={314} y={174} />
        <NodeBody x={111} y={230} selected>
          <g transform="translate(-9 -9) scale(.75)" fill="none"><TrailBeads /></g>
        </NodeBody>
        <Clock x={163} y={247} />
        <NodeBody x={262} y={312} flag>
          <path d="M-9-5q4-5 9-1t9 1M-9 4q4-4 9 0t9 1" stroke="#555" strokeWidth="1.300" fill="none" />
          <path d="M-9-5q4-5 9-1t9 1M-9 4q4-4 9 0t9 1" stroke="#d08a80" strokeWidth="1.500" strokeDasharray="2.500 3" fill="none" />
        </NodeBody>
        <Clock x={314} y={327} />
      </svg>
      <div className="text-[15px] leading-[20px] text-[#c6c6c6]">
        <span className="absolute left-[306px] top-[39px]">sphere1</span>
        <span className="absolute left-[306px] top-[96px]">scatter1</span>
        <span className="absolute left-[306px] top-[147px]">transform1</span>
        <span className="absolute left-[155px] top-[219px]">trail1</span>
        <span className="absolute left-[306px] top-[301px]">resample1</span>
      </div>
      <h2 className="absolute right-[10px] top-[13px] text-[25px] font-bold leading-[36px] text-[#505050]">Geometry</h2>
    </div>
  );
}

export default function App() {
  return (
    <div className={`flex min-h-screen flex-col bg-[#3a3a3a] leading-normal ${UI}`}>
      <Defs />
      <div className="grid flex-1 grid-cols-[minmax(0,497fr)_7px_minmax(0,635fr)]">
        <LeftPane />
        <div className="flex flex-col items-center border-r border-[#303030] bg-[#4a4a4a] pt-[332px]">
          <svg width="5" height="80" viewBox="0 0 5 80" aria-hidden="true">
            <path d="M5 1v7L1 4.500zM0 73v7l4-3.500z" fill="#8c8c8c" />
            <path d="M1 28v24M4 28v24" stroke="#808080" strokeWidth="1.500" strokeDasharray="1.500 1.500" />
          </svg>
        </div>
        <main className="flex min-w-0 flex-col">
          <div className="h-[4px] border-b border-black" />
          <ParamHeader />
          <Params />
          <div className="flex h-[7px] items-center justify-center gap-[22px] border-t border-[#808080] bg-[#4a4a4a] text-[#8c8c8c]">
            <Tri up className="h-[4px] w-[7px]" />
            <svg width="24" height="5" viewBox="0 0 24 5" aria-hidden="true"><path d="M0 1h24M0 4h24" stroke="#858585" strokeWidth="1.500" strokeDasharray="1.500 1.500" /></svg>
            <Tri className="h-[4px] w-[7px]" />
          </div>
          <Tabs />
          <PathBar />
          <MenuBar />
          <Network />
        </main>
      </div>
      <div className="h-[2px] bg-[#555555]" />
    </div>
  );
}
